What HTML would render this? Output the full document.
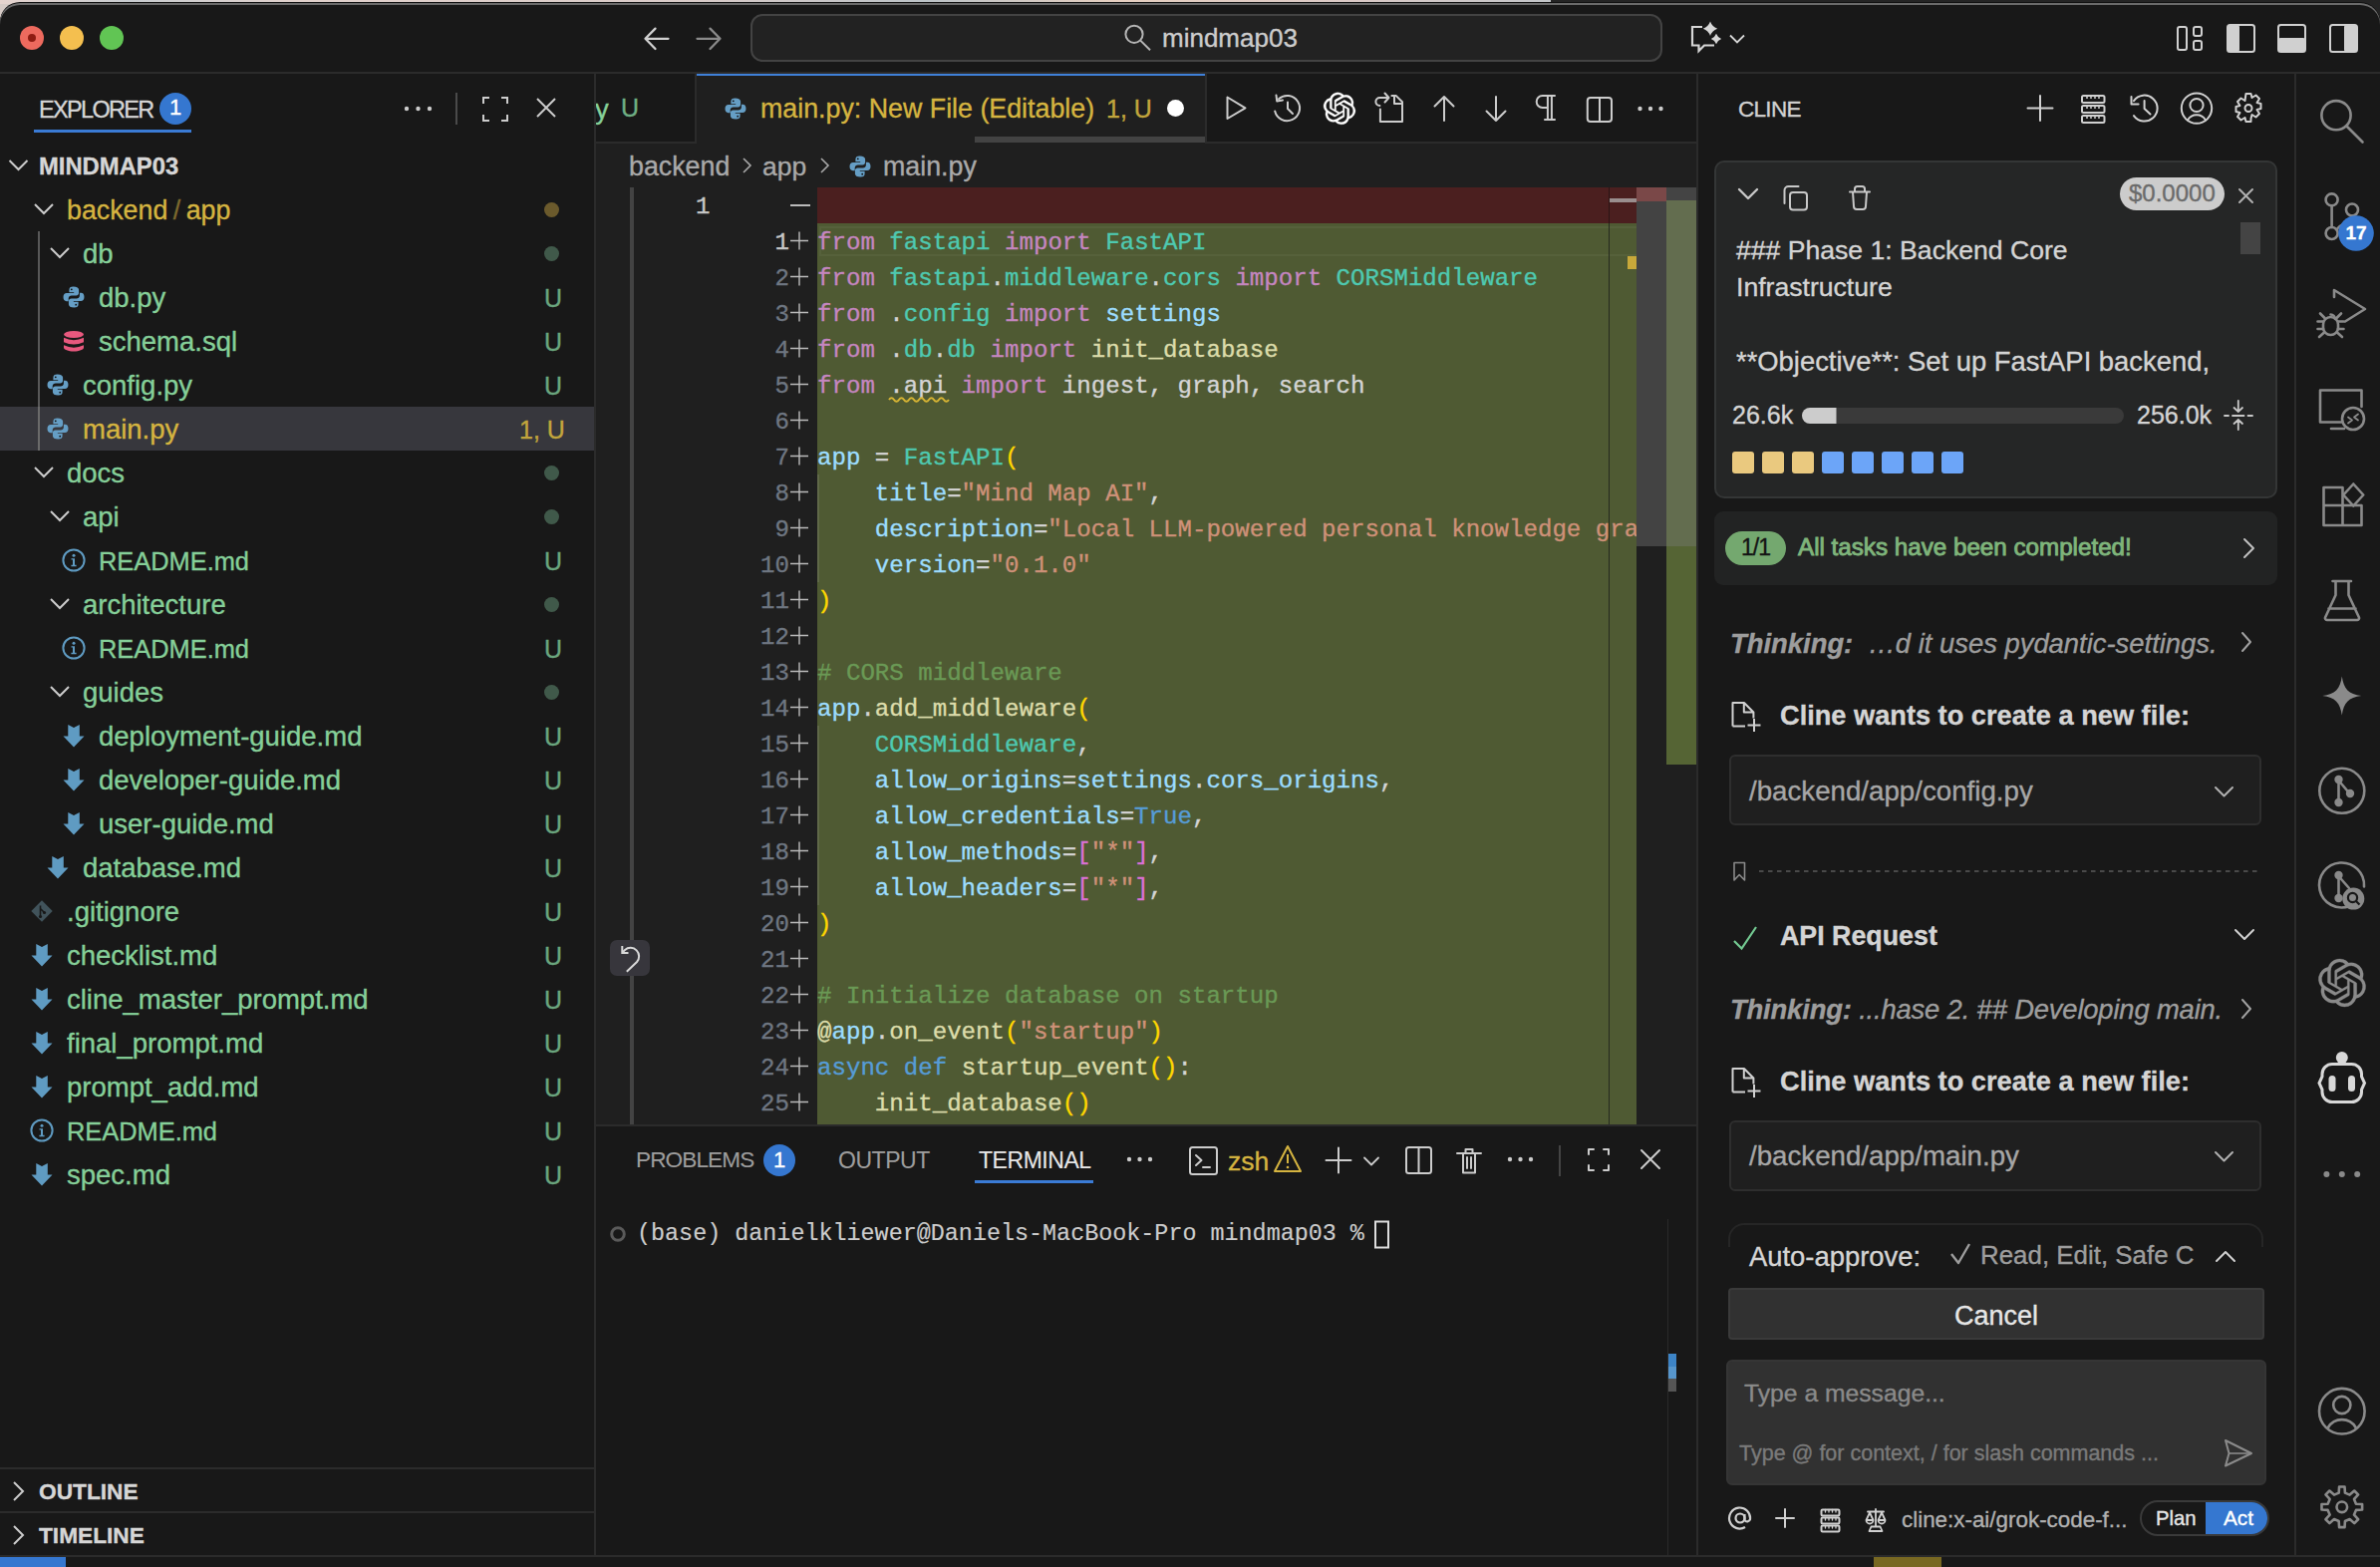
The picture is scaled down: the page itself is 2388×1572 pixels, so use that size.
<!DOCTYPE html>
<html><head><meta charset="utf-8">
<style>
*{box-sizing:border-box;margin:0;padding:0}
html,body{width:2388px;height:1572px;overflow:hidden;background:#d6cbc6}
body{position:relative;font-family:"Liberation Sans",sans-serif;color:#cccccc;-webkit-text-stroke:0.35px currentColor}
.a{position:absolute}
.t{position:absolute;white-space:pre;line-height:1}
.mono{font-family:"Liberation Mono",monospace}
svg{position:absolute;overflow:visible}
#win{position:absolute;left:0;top:3px;width:2388px;height:1569px;background:#181818;border-radius:20px 20px 0 0;box-shadow:inset 0 2px 0 #6a6a6a,0 -1px 0 #111}
.row{position:absolute;left:0;width:596px;height:44px}
.fn{position:absolute;top:0;margin-top:1px;line-height:44px;font-size:26.5px;white-space:pre;color:#81c995}
.gd{position:absolute;right:44px;top:0;margin-top:1px;line-height:44px;font-size:25px;color:#6aa57e}
.dot{position:absolute;left:546px;top:15px;width:15px;height:15px;border-radius:50%;background:#40594a}
.chev{position:absolute;top:0}
.cl{position:absolute;left:820px;white-space:pre;font-family:"Liberation Mono",monospace;font-size:24.1px;line-height:36px;color:#d4d4d4}
.ln{position:absolute;white-space:pre;font-family:"Liberation Mono",monospace;font-size:24.1px;line-height:36px;color:#6e7681;text-align:right}
.k{color:#c586c0}.m{color:#4ec9b0}.v{color:#9cdcfe}.f{color:#dcdcaa}.s{color:#ce9178}.c{color:#6a9955}.b{color:#569cd6}.y{color:#ffd700}.p{color:#da70d6}
</style></head><body>
<svg width="0" height="0" style="position:absolute"><defs>
<path id="i_oai" d="M22.2819 9.8211a5.9847 5.9847 0 0 0-.5157-4.9108 6.0462 6.0462 0 0 0-6.5098-2.9A6.0651 6.0651 0 0 0 4.9807 4.1818a5.9847 5.9847 0 0 0-3.9977 2.9 6.0462 6.0462 0 0 0 .7427 7.0966 5.98 5.98 0 0 0 .511 4.9107 6.051 6.051 0 0 0 6.5146 2.9001A5.9847 5.9847 0 0 0 13.2599 24a6.0557 6.0557 0 0 0 5.7718-4.2058 5.9894 5.9894 0 0 0 3.9977-2.9001 6.0557 6.0557 0 0 0-.7475-7.0729zm-9.022 12.6081a4.4755 4.4755 0 0 1-2.8764-1.0408l.1419-.0804 4.7783-2.7582a.7948.7948 0 0 0 .3927-.6813v-6.7369l2.02 1.1686a.071.071 0 0 1 .038.052v5.5826a4.504 4.504 0 0 1-4.4945 4.4944zm-9.6607-4.1254a4.4708 4.4708 0 0 1-.5346-3.0137l.142.0852 4.783 2.7582a.7712.7712 0 0 0 .7806 0l5.8428-3.3685v2.3324a.0804.0804 0 0 1-.0332.0615L9.74 19.9502a4.4992 4.4992 0 0 1-6.1408-1.6464zM2.3408 7.8956a4.485 4.485 0 0 1 2.3655-1.9728V11.6a.7664.7664 0 0 0 .3879.6765l5.8144 3.3543-2.0201 1.1685a.0757.0757 0 0 1-.071 0l-4.8303-2.7865A4.504 4.504 0 0 1 2.3408 7.872zm16.5963 3.8558L13.1038 8.364 15.1192 7.2a.0757.0757 0 0 1 .071 0l4.8303 2.7913a4.4944 4.4944 0 0 1-.6765 8.1042v-5.6772a.79.79 0 0 0-.407-.667zm2.0107-3.0231l-.142-.0852-4.7735-2.7818a.7759.7759 0 0 0-.7854 0L9.409 9.2297V6.8974a.0662.0662 0 0 1 .0284-.0615l4.8303-2.7866a4.4992 4.4992 0 0 1 6.6802 4.66zM8.3065 12.863l-2.02-1.1638a.0804.0804 0 0 1-.038-.0567V6.0742a4.4992 4.4992 0 0 1 7.3757-3.4537l-.142.0805L8.704 5.459a.7948.7948 0 0 0-.3927.6813zm1.0976-2.3654l2.602-1.4998 2.6069 1.4998v2.9994l-2.5974 1.4997-2.6067-1.4997Z"/>
<g id="i_py"><path fill="#659ec5" d="M11.6 1.5C8.6 1.5 7.4 2.7 7.4 4.8V7.2H12.2V8.1H4.9C2.9 8.1 1.5 9.6 1.5 12.1C1.5 14.6 2.7 16.2 4.7 16.2H6.7V13.4C6.7 11.6 8.1 10.5 9.9 10.5H14.4C16 10.5 17.1 9.4 17.1 7.8V4.8C17.1 2.8 15.2 1.5 11.6 1.5Z"/><path fill="#659ec5" d="M12.4 22.5C15.4 22.5 16.6 21.3 16.6 19.2V16.8H11.8V15.9H19.1C21.1 15.9 22.5 14.4 22.5 11.9C22.5 9.4 21.3 7.8 19.3 7.8H17.9V10.6C17.9 12.4 16.5 13.5 14.7 13.5H9.6C8 13.5 6.9 14.6 6.9 16.2V19.2C6.9 21.2 8.8 22.5 12.4 22.5Z"/><circle cx="9.8" cy="4.3" r="0.9" fill="#111"/><circle cx="14.2" cy="19.7" r="0.9" fill="#111"/></g>
<g id="i_sql" fill="#e8587e"><ellipse cx="12" cy="5.5" rx="10" ry="3.5"/><path d="M2 8.8Q12 13.5 22 8.8V13.2Q12 18 2 13.2Z"/><path d="M2 16.3Q12 21 22 16.3V18.8C22 20.8 17.5 22.5 12 22.5S2 20.8 2 18.8Z"/></g>
<g id="i_info"><circle cx="12" cy="12" r="10.6" fill="none" stroke="#5f9bc2" stroke-width="2"/><circle cx="12" cy="7.3" r="1.5" fill="#5f9bc2"/><path d="M9.5 10.2H13V16.8H14.6V18.2H9.4V16.8H11V11.6H9.5Z" fill="#5f9bc2"/></g>
<g id="i_md"><path fill="#5f9bc2" d="M6.3 1L12 4 17.8 1V12.5H22.5L12 23.5 1.5 12.5H6.3Z"/></g>
<g id="i_git"><path fill="#41535b" d="M12 1.3L22.7 12 12 22.7 1.3 12Z"/><path d="M10.5 6.5V17.5M10.5 9.5L14.5 13.5" stroke="#181818" stroke-width="1.6" fill="none"/><circle cx="10.5" cy="17.5" r="1.6" fill="#181818"/><circle cx="14.5" cy="13.5" r="1.6" fill="#181818"/></g>
</defs></svg>

<div class="a" style="left:0;top:0;width:1556px;height:4px;background:linear-gradient(90deg,#e6d4ce 0,#c8ccd0 130px,#e2d2cc 300px,#d9cbc8 700px,#bcc3c7 930px,#e6cfc0 1120px,#dccac6 1350px,#c3c6c9 1556px)"></div>
<div class="a" style="left:1556px;top:0;width:832px;height:4px;background:#242424"></div>
<div class="a" style="left:2350px;top:0;width:38px;height:30px;background:#242424"></div>
<div id="win"></div>
<!-- title bar -->
<div class="a" style="left:0;top:72px;width:2388px;height:2px;background:#2b2b2b"></div>
<div class="a" style="left:20px;top:26px;width:24px;height:24px;border-radius:50%;background:#ed6a5e"></div>
<div class="a" style="left:28px;top:34px;width:8px;height:8px;border-radius:50%;background:#8e1c12"></div>
<div class="a" style="left:60px;top:26px;width:24px;height:24px;border-radius:50%;background:#f4bf4f"></div>
<div class="a" style="left:100px;top:26px;width:24px;height:24px;border-radius:50%;background:#61c554"></div>
<svg style="left:0;top:0" width="2388" height="74">
<g fill="none" stroke="#d0d0d0" stroke-width="2.3" stroke-linecap="round" stroke-linejoin="round">
<path d="M670.5 38.8H648M657.5 28.6L647.5 38.8L657.5 49"/>
</g>
<g fill="none" stroke="#8a8a8a" stroke-width="2.3" stroke-linecap="round" stroke-linejoin="round">
<path d="M699.5 38.8H722M712.5 28.6L722.5 38.8L712.5 49"/>
</g>
<rect x="754" y="15" width="913" height="46" rx="11" fill="#222222" stroke="#434343" stroke-width="2"/>
<g fill="none" stroke="#b5b5b5" stroke-width="2"><circle cx="1138" cy="34.3" r="8.6"/><path d="M1144.3 40.6L1154 50.3"/></g>
<g fill="none" stroke="#d6d6d6" stroke-width="2.2" stroke-linejoin="miter">
<path d="M1708 27H1698V45.5H1704.5V51L1710 45.5H1720"/>
<path d="M1736 35.5L1743 42.5L1750 35.5" stroke-width="1.8"/>
</g>
<g fill="#d6d6d6">
<path d="M1716 21.6Q1717.9 26.9 1723.2 28.8Q1717.9 30.7 1716 36Q1714.1 30.7 1708.8 28.8Q1714.1 26.9 1716 21.6Z"/>
<path d="M1722 33.8Q1723.4 37.6 1727.2 39Q1723.4 40.4 1722 44.2Q1720.6 40.4 1716.8 39Q1720.6 37.6 1722 33.8Z"/>
</g>
<g fill="none" stroke="#d0d0d0" stroke-width="2">
<rect x="2185" y="27" width="9" height="23" rx="2"/><rect x="2201" y="27" width="8" height="9" rx="2"/><rect x="2201" y="41" width="8" height="9" rx="2"/>
<rect x="2235" y="25" width="27" height="27" rx="2.5"/>
<rect x="2286" y="25" width="27" height="27" rx="2.5"/>
<rect x="2338" y="25" width="27" height="27" rx="2.5"/>
</g>
<g fill="#d0d0d0">
<rect x="2235" y="25" width="12" height="27" rx="2"/>
<rect x="2286" y="38" width="27" height="14" rx="2"/>
<rect x="2352" y="25" width="13" height="27" rx="2"/>
</g>
</svg>
<div class="t" style="left:1166px;top:25px;font-size:26px;color:#cccccc">mindmap03</div>

<!--SIDEBAR-->
<div class="a" style="left:596px;top:74px;width:2px;height:1486px;background:#2b2b2b"></div>
<div class="t" style="left:39px;top:99px;font-size:23.4px;letter-spacing:-1.6px;color:#d6d6d6">EXPLORER</div>
<div class="a" style="left:160px;top:93px;width:32px;height:32px;border-radius:50%;background:#3577d0"></div>
<div class="t" style="left:160px;top:97px;width:32px;text-align:center;font-size:22px;color:#fff">1</div>
<div class="a" style="left:34px;top:130px;width:158px;height:3px;background:#3a7bd5"></div>
<svg style="left:0;top:74px" width="596" height="70"><g fill="#cccccc"><circle cx="408" cy="35" r="2.2"/><circle cx="419.5" cy="35" r="2.2"/><circle cx="431" cy="35" r="2.2"/></g>
<rect x="457" y="19" width="2" height="32" fill="#4a4a4a"/>
<g fill="none" stroke="#cccccc" stroke-width="2"><path d="M485 30V24H491M503 24H509V30M509 41V47H503M491 47H485V41"/><path d="M539 25L557 43M557 25L539 43"/></g></svg>
<svg style="left:0;top:144px" width="40" height="44"><path d="M9.5 17L18.5 26L27.5 17" fill="none" stroke="#cccccc" stroke-width="2"/></svg>
<div class="t" style="left:39px;top:155px;font-size:23.8px;font-weight:bold;color:#d6d6d6">MINDMAP03</div>
<div class="a" style="left:38px;top:232px;width:2px;height:220px;background:#585858"></div>
<div class="a" style="left:0;top:408px;width:596px;height:44px;background:#37373d"></div>
<div class="a" style="left:38px;top:408px;width:2px;height:44px;background:#6a6a6a"></div>
<svg style="left:34px;top:188px" width="22" height="44"><path d="M1 17L10 26L19 17" fill="none" stroke="#cccccc" stroke-width="2"/></svg>
<div class="fn" style="left:67px;top:188px;color:#d5b440;font-size:26.8px">backend<span style="color:#7d6a2e;margin:0 -2px"> / </span>app</div>
<div class="dot" style="top:203px;background:#6b5a2c"></div>
<svg style="left:50px;top:232px" width="22" height="44"><path d="M1 17L10 26L19 17" fill="none" stroke="#cccccc" stroke-width="2"/></svg>
<div class="fn" style="left:83px;top:232px;color:#85cf98;font-size:27.5px">db</div>
<div class="dot" style="top:247px"></div>
<svg style="left:61.5px;top:286px" width="24" height="24"><use href="#i_py"/></svg>
<div class="fn" style="left:99px;top:276px;color:#85cf98;font-size:27.5px">db.py</div>
<div class="gd" style="top:276px;right:auto;left:546px">U</div>
<svg style="left:61.5px;top:330px" width="24" height="24"><use href="#i_sql"/></svg>
<div class="fn" style="left:99px;top:320px;color:#85cf98;font-size:27.5px">schema.sql</div>
<div class="gd" style="top:320px;right:auto;left:546px">U</div>
<svg style="left:45.5px;top:374px" width="24" height="24"><use href="#i_py"/></svg>
<div class="fn" style="left:83px;top:364px;color:#85cf98;font-size:27.5px">config.py</div>
<div class="gd" style="top:364px;right:auto;left:546px">U</div>
<svg style="left:45.5px;top:418px" width="24" height="24"><use href="#i_py"/></svg>
<div class="fn" style="left:83px;top:408px;color:#d5b440;font-size:27.5px">main.py</div>
<div class="gd" style="top:408px;right:auto;left:521px;color:#c1a53c">1, U</div>
<svg style="left:34px;top:452px" width="22" height="44"><path d="M1 17L10 26L19 17" fill="none" stroke="#cccccc" stroke-width="2"/></svg>
<div class="fn" style="left:67px;top:452px;color:#85cf98;font-size:27.5px">docs</div>
<div class="dot" style="top:467px"></div>
<svg style="left:50px;top:496px" width="22" height="44"><path d="M1 17L10 26L19 17" fill="none" stroke="#cccccc" stroke-width="2"/></svg>
<div class="fn" style="left:83px;top:496px;color:#85cf98;font-size:27.5px">api</div>
<div class="dot" style="top:511px"></div>
<svg style="left:61.5px;top:550px" width="24" height="24"><use href="#i_info"/></svg>
<div class="fn" style="left:99px;top:540px;color:#85cf98;font-size:25.4px">README.md</div>
<div class="gd" style="top:540px;right:auto;left:546px">U</div>
<svg style="left:50px;top:584px" width="22" height="44"><path d="M1 17L10 26L19 17" fill="none" stroke="#cccccc" stroke-width="2"/></svg>
<div class="fn" style="left:83px;top:584px;color:#85cf98;font-size:27.5px">architecture</div>
<div class="dot" style="top:599px"></div>
<svg style="left:61.5px;top:638px" width="24" height="24"><use href="#i_info"/></svg>
<div class="fn" style="left:99px;top:628px;color:#85cf98;font-size:25.4px">README.md</div>
<div class="gd" style="top:628px;right:auto;left:546px">U</div>
<svg style="left:50px;top:672px" width="22" height="44"><path d="M1 17L10 26L19 17" fill="none" stroke="#cccccc" stroke-width="2"/></svg>
<div class="fn" style="left:83px;top:672px;color:#85cf98;font-size:27.5px">guides</div>
<div class="dot" style="top:687px"></div>
<svg style="left:61.5px;top:726px" width="24" height="24"><use href="#i_md"/></svg>
<div class="fn" style="left:99px;top:716px;color:#85cf98;font-size:27.5px">deployment-guide.md</div>
<div class="gd" style="top:716px;right:auto;left:546px">U</div>
<svg style="left:61.5px;top:770px" width="24" height="24"><use href="#i_md"/></svg>
<div class="fn" style="left:99px;top:760px;color:#85cf98;font-size:27.5px">developer-guide.md</div>
<div class="gd" style="top:760px;right:auto;left:546px">U</div>
<svg style="left:61.5px;top:814px" width="24" height="24"><use href="#i_md"/></svg>
<div class="fn" style="left:99px;top:804px;color:#85cf98;font-size:27.5px">user-guide.md</div>
<div class="gd" style="top:804px;right:auto;left:546px">U</div>
<svg style="left:45.5px;top:858px" width="24" height="24"><use href="#i_md"/></svg>
<div class="fn" style="left:83px;top:848px;color:#85cf98;font-size:27.5px">database.md</div>
<div class="gd" style="top:848px;right:auto;left:546px">U</div>
<svg style="left:29.5px;top:902px" width="24" height="24"><use href="#i_git"/></svg>
<div class="fn" style="left:67px;top:892px;color:#85cf98;font-size:27.5px">.gitignore</div>
<div class="gd" style="top:892px;right:auto;left:546px">U</div>
<svg style="left:29.5px;top:946px" width="24" height="24"><use href="#i_md"/></svg>
<div class="fn" style="left:67px;top:936px;color:#85cf98;font-size:27.5px">checklist.md</div>
<div class="gd" style="top:936px;right:auto;left:546px">U</div>
<svg style="left:29.5px;top:990px" width="24" height="24"><use href="#i_md"/></svg>
<div class="fn" style="left:67px;top:980px;color:#85cf98;font-size:27.5px">cline_master_prompt.md</div>
<div class="gd" style="top:980px;right:auto;left:546px">U</div>
<svg style="left:29.5px;top:1034px" width="24" height="24"><use href="#i_md"/></svg>
<div class="fn" style="left:67px;top:1024px;color:#85cf98;font-size:27.5px">final_prompt.md</div>
<div class="gd" style="top:1024px;right:auto;left:546px">U</div>
<svg style="left:29.5px;top:1078px" width="24" height="24"><use href="#i_md"/></svg>
<div class="fn" style="left:67px;top:1068px;color:#85cf98;font-size:27.5px">prompt_add.md</div>
<div class="gd" style="top:1068px;right:auto;left:546px">U</div>
<svg style="left:29.5px;top:1122px" width="24" height="24"><use href="#i_info"/></svg>
<div class="fn" style="left:67px;top:1112px;color:#85cf98;font-size:25.4px">README.md</div>
<div class="gd" style="top:1112px;right:auto;left:546px">U</div>
<svg style="left:29.5px;top:1166px" width="24" height="24"><use href="#i_md"/></svg>
<div class="fn" style="left:67px;top:1156px;color:#85cf98;font-size:27.5px">spec.md</div>
<div class="gd" style="top:1156px;right:auto;left:546px">U</div>
<div class="a" style="left:0;top:1472px;width:596px;height:2px;background:#2b2b2b"></div>
<div class="a" style="left:0;top:1516px;width:596px;height:2px;background:#2b2b2b"></div>
<svg style="left:0;top:1474px" width="40" height="44"><path d="M14 13L23 22L14 31" fill="none" stroke="#cccccc" stroke-width="2"/></svg>
<div class="t" style="left:39px;top:1485px;font-size:22.7px;font-weight:bold;color:#d6d6d6">OUTLINE</div>
<svg style="left:0;top:1518px" width="40" height="44"><path d="M14 13L23 22L14 31" fill="none" stroke="#cccccc" stroke-width="2"/></svg>
<div class="t" style="left:39px;top:1529px;font-size:22.7px;font-weight:bold;color:#d6d6d6">TIMELINE</div>
<!--/SIDEBAR-->
<!--EDITOR-->
<div class="a" style="left:598px;top:142px;width:1104px;height:2px;background:#2b2b2b"></div>
<div class="a" style="left:697px;top:74px;width:2px;height:70px;background:#2b2b2b"></div>
<div class="a" style="left:598px;top:74px;width:99px;height:68px;overflow:hidden"><div class="t" style="left:-1px;top:22px;font-size:27.5px;color:#85cf98">y</div><div class="t" style="left:25px;top:22px;font-size:25px;color:#6fae84">U</div></div>
<div class="a" style="left:699px;top:74px;width:510px;height:70px;background:#1f1f1f"></div>
<div class="a" style="left:699px;top:74px;width:510px;height:2px;background:#3f80d8"></div>
<div class="a" style="left:1209px;top:74px;width:2px;height:70px;background:#2b2b2b"></div>
<svg style="left:726px;top:97px" width="24" height="24"><use href="#i_py"/></svg>
<div class="t" style="left:763px;top:96px;font-size:26.8px;color:#d5b440">main.py: New File (Editable)</div>
<div class="t" style="left:1110px;top:97px;font-size:25px;color:#c1a53c">1, U</div>
<div class="a" style="left:1171px;top:100px;width:17px;height:17px;border-radius:50%;background:#ffffff"></div>
<div class="a" style="left:978px;top:137px;width:231px;height:6px;background:#434343"></div>
<svg style="left:1211px;top:74px" width="491" height="68"><g fill="none" stroke="#cccccc" stroke-width="2" stroke-linejoin="round" stroke-linecap="round">
<path d="M20.5 23.5V45L38.5 34.3Z"/>
<path d="M72 25.2A12.6 12.6 0 1 1 68.2 37.5"/><path d="M69.5 21.5L70.2 27.5L76 26.5"/><path d="M81 28.5V35L86 40"/>
<path d="M1391 0" />
<path d="M173.9 35.4V48H196V28.2L189.6 21.9H185.4"/><path d="M188 22V30H196"/><path d="M173.4 32A4 4 0 0 1 173.4 24H182M178.5 19.5L182.5 24L178.5 28.5"/>
<path d="M238 47V23M228.5 32.5L238 23L247.5 32.5"/>
<path d="M290 23V47M280.5 37.5L290 47L299.5 37.5"/>
<path d="M336.6 22.1H349M341.9 22.1V45.9M345.9 22.1V45.9M339 45.9H349M341.9 22.1H336.6A5.9 5.9 0 0 0 336.6 33.9H341.9"/>
<rect x="381.8" y="24" width="24.2" height="24" rx="3"/><path d="M394 24V48"/>
</g>

<g fill="#cccccc"><circle cx="434.5" cy="35" r="2.2"/><circle cx="445" cy="35" r="2.2"/><circle cx="455.5" cy="35" r="2.2"/></g>
<use href="#i_oai" transform="translate(117 18.8) scale(1.333)" fill="#ffffff" stroke="#ffffff" stroke-width="0.25"/>
</svg>
<div class="a" style="left:598px;top:144px;width:1104px;height:984px;background:#1f1f1f"></div>
<div class="t" style="left:631px;top:154px;font-size:26.8px;color:#a9a9a9">backend</div>
<div class="t" style="left:765px;top:154px;font-size:26.5px;color:#a9a9a9">app</div>
<div class="t" style="left:886px;top:154px;font-size:26.8px;color:#a9a9a9">main.py</div>
<svg style="left:0;top:144px" width="1000" height="44"><g fill="none" stroke="#a9a9a9" stroke-width="1.6"><path d="M746 15L753 22L746 29"/><path d="M824 15L831 22L824 29"/></g></svg>
<svg style="left:851px;top:155px" width="24" height="24"><use href="#i_py"/></svg>
<div class="a" style="left:632px;top:188px;width:4px;height:940px;background:#434343"></div>
<div class="a" style="left:820px;top:188px;width:822px;height:36px;background:#4b1f1f"></div>
<div class="a" style="left:820px;top:224px;width:822px;height:904px;background:#4f5a33"></div>
<div class="a" style="left:822px;top:227px;width:820px;height:30px;border:2px solid rgba(255,255,255,0.045);border-right:none"></div>
<div class="a" style="left:1614px;top:188px;width:1px;height:940px;background:#262a1f"></div>
<div class="a" style="left:1614px;top:188px;width:1px;height:36px;background:#2a1515"></div>
<div class="a" style="left:1615px;top:199px;width:27px;height:4px;background:#9a8e8e"></div>
<div class="a" style="left:1633px;top:257px;width:9px;height:13px;background:#c8a83a"></div>
<div class="a" style="left:1642px;top:188px;width:30px;height:360px;background:#434343"></div>
<div class="a" style="left:1642px;top:188px;width:30px;height:14px;background:#7a4848"></div>
<div class="a" style="left:1672px;top:188px;width:30px;height:13px;background:#444444"></div>
<div class="a" style="left:1672px;top:201px;width:30px;height:347px;background:#636d4f"></div>
<div class="a" style="left:1672px;top:548px;width:30px;height:219px;background:#556434"></div>
<div class="a" style="left:820px;top:728px;width:2px;height:180px;background:#5f6848"></div>
<div class="a" style="left:820px;top:476px;width:2px;height:108px;background:#5f6848"></div>
<div class="ln" style="left:698px;top:190px;width:30px;text-align:left;color:#c6c6c6">1</div>
<div class="a" style="left:793px;top:205px;width:20px;height:1.6px;background:#bbbbbb"></div>
<div class="ln" style="left:700px;top:226px;width:92px;color:#c6c6c6">1</div>
<div class="ln" style="left:700px;top:262px;width:92px;color:#6e7681">2</div>
<div class="ln" style="left:700px;top:298px;width:92px;color:#6e7681">3</div>
<div class="ln" style="left:700px;top:334px;width:92px;color:#6e7681">4</div>
<div class="ln" style="left:700px;top:370px;width:92px;color:#6e7681">5</div>
<div class="ln" style="left:700px;top:406px;width:92px;color:#6e7681">6</div>
<div class="ln" style="left:700px;top:442px;width:92px;color:#6e7681">7</div>
<div class="ln" style="left:700px;top:478px;width:92px;color:#6e7681">8</div>
<div class="ln" style="left:700px;top:514px;width:92px;color:#6e7681">9</div>
<div class="ln" style="left:700px;top:550px;width:92px;color:#6e7681">10</div>
<div class="ln" style="left:700px;top:586px;width:92px;color:#6e7681">11</div>
<div class="ln" style="left:700px;top:622px;width:92px;color:#6e7681">12</div>
<div class="ln" style="left:700px;top:658px;width:92px;color:#6e7681">13</div>
<div class="ln" style="left:700px;top:694px;width:92px;color:#6e7681">14</div>
<div class="ln" style="left:700px;top:730px;width:92px;color:#6e7681">15</div>
<div class="ln" style="left:700px;top:766px;width:92px;color:#6e7681">16</div>
<div class="ln" style="left:700px;top:802px;width:92px;color:#6e7681">17</div>
<div class="ln" style="left:700px;top:838px;width:92px;color:#6e7681">18</div>
<div class="ln" style="left:700px;top:874px;width:92px;color:#6e7681">19</div>
<div class="ln" style="left:700px;top:910px;width:92px;color:#6e7681">20</div>
<div class="ln" style="left:700px;top:946px;width:92px;color:#6e7681">21</div>
<div class="ln" style="left:700px;top:982px;width:92px;color:#6e7681">22</div>
<div class="ln" style="left:700px;top:1018px;width:92px;color:#6e7681">23</div>
<div class="ln" style="left:700px;top:1054px;width:92px;color:#6e7681">24</div>
<div class="ln" style="left:700px;top:1090px;width:92px;color:#6e7681">25</div>
<svg style="left:0;top:0" width="1000" height="1130"><g stroke="#bbbbbb" stroke-width="1.4" fill="none"><path d="M793 241.5H811M802 232.5V250.5"/><path d="M793 277.5H811M802 268.5V286.5"/><path d="M793 313.5H811M802 304.5V322.5"/><path d="M793 349.5H811M802 340.5V358.5"/><path d="M793 385.5H811M802 376.5V394.5"/><path d="M793 421.5H811M802 412.5V430.5"/><path d="M793 457.5H811M802 448.5V466.5"/><path d="M793 493.5H811M802 484.5V502.5"/><path d="M793 529.5H811M802 520.5V538.5"/><path d="M793 565.5H811M802 556.5V574.5"/><path d="M793 601.5H811M802 592.5V610.5"/><path d="M793 637.5H811M802 628.5V646.5"/><path d="M793 673.5H811M802 664.5V682.5"/><path d="M793 709.5H811M802 700.5V718.5"/><path d="M793 745.5H811M802 736.5V754.5"/><path d="M793 781.5H811M802 772.5V790.5"/><path d="M793 817.5H811M802 808.5V826.5"/><path d="M793 853.5H811M802 844.5V862.5"/><path d="M793 889.5H811M802 880.5V898.5"/><path d="M793 925.5H811M802 916.5V934.5"/><path d="M793 961.5H811M802 952.5V970.5"/><path d="M793 997.5H811M802 988.5V1006.5"/><path d="M793 1033.5H811M802 1024.5V1042.5"/><path d="M793 1069.5H811M802 1060.5V1078.5"/><path d="M793 1105.5H811M802 1096.5V1114.5"/></g></svg>
<div class="a" style="left:0;top:0;width:1642px;height:1128px;overflow:hidden"><div class="cl" style="top:226px"><span class="k">from</span> <span class="m">fastapi</span> <span class="k">import</span> <span class="m">FastAPI</span></div><div class="cl" style="top:262px"><span class="k">from</span> <span class="m">fastapi</span>.<span class="m">middleware</span>.<span class="m">cors</span> <span class="k">import</span> <span class="m">CORSMiddleware</span></div><div class="cl" style="top:298px"><span class="k">from</span> .<span class="m">config</span> <span class="k">import</span> <span class="v">settings</span></div><div class="cl" style="top:334px"><span class="k">from</span> .<span class="m">db</span>.<span class="m">db</span> <span class="k">import</span> <span class="f">init_database</span></div><div class="cl" style="top:370px"><span class="k">from</span> .api <span class="k">import</span> ingest, graph, search</div><div class="cl" style="top:406px"></div><div class="cl" style="top:442px"><span class="v">app</span> = <span class="m">FastAPI</span><span class="y">(</span></div><div class="cl" style="top:478px">    <span class="v">title</span>=<span class="s">&quot;Mind Map AI&quot;</span>,</div><div class="cl" style="top:514px">    <span class="v">description</span>=<span class="s">&quot;Local LLM-powered personal knowledge graph system&quot;</span>,</div><div class="cl" style="top:550px">    <span class="v">version</span>=<span class="s">&quot;0.1.0&quot;</span></div><div class="cl" style="top:586px"><span class="y">)</span></div><div class="cl" style="top:622px"></div><div class="cl" style="top:658px"><span class="c"># CORS middleware</span></div><div class="cl" style="top:694px"><span class="v">app</span>.<span class="f">add_middleware</span><span class="y">(</span></div><div class="cl" style="top:730px">    <span class="m">CORSMiddleware</span>,</div><div class="cl" style="top:766px">    <span class="v">allow_origins</span>=<span class="v">settings</span>.<span class="v">cors_origins</span>,</div><div class="cl" style="top:802px">    <span class="v">allow_credentials</span>=<span class="b">True</span>,</div><div class="cl" style="top:838px">    <span class="v">allow_methods</span>=<span class="p">[</span><span class="s">&quot;*&quot;</span><span class="p">]</span>,</div><div class="cl" style="top:874px">    <span class="v">allow_headers</span>=<span class="p">[</span><span class="s">&quot;*&quot;</span><span class="p">]</span>,</div><div class="cl" style="top:910px"><span class="y">)</span></div><div class="cl" style="top:946px"></div><div class="cl" style="top:982px"><span class="c"># Initialize database on startup</span></div><div class="cl" style="top:1018px"><span class="f">@</span><span class="v">app</span>.<span class="f">on_event</span><span class="y">(</span><span class="s">&quot;startup&quot;</span><span class="y">)</span></div><div class="cl" style="top:1054px"><span class="b">async</span> <span class="b">def</span> <span class="f">startup_event</span><span class="y">()</span>:</div><div class="cl" style="top:1090px">    <span class="f">init_database</span><span class="y">()</span></div></div>
<svg style="left:0;top:0" width="1000" height="420"><path d="M892 401 q2.5 -3.5 5 0 q2.5 3.5 5 0 q2.5 -3.5 5 0 q2.5 3.5 5 0 q2.5 -3.5 5 0 q2.5 3.5 5 0 q2.5 -3.5 5 0 q2.5 3.5 5 0 q2.5 -3.5 5 0 q2.5 3.5 5 0 q2.5 -3.5 5 0 q2.5 3.5 5 0" fill="none" stroke="#d7b433" stroke-width="2"/></svg>
<div class="a" style="left:612px;top:943px;width:40px;height:36px;border-radius:7px;background:#37363c"></div>
<svg style="left:611px;top:942px" width="42" height="38"><g fill="none" stroke="#d8d8d8" stroke-width="2" stroke-linecap="butt" stroke-linejoin="miter"><path d="M13.3 7V14H19.5"/><path d="M13.5 13.5L16 11A8.5 8.5 0 0 1 28 23L17.8 32.8"/></g></svg>
<!--/EDITOR-->
<!--PANEL-->
<div class="a" style="left:598px;top:1128px;width:1104px;height:2px;background:#2b2b2b"></div>
<div class="t" style="left:638px;top:1153px;font-size:22.6px;letter-spacing:-0.9px;-webkit-text-stroke:0.1px #9d9d9d;color:#9d9d9d">PROBLEMS</div>
<div class="a" style="left:766px;top:1148px;width:32px;height:32px;border-radius:50%;background:#3577d0"></div>
<div class="t" style="left:766px;top:1153px;width:32px;text-align:center;font-size:22px;color:#fff">1</div>
<div class="t" style="left:841px;top:1153px;font-size:23px;letter-spacing:-0.45px;-webkit-text-stroke:0.1px #9d9d9d;color:#9d9d9d">OUTPUT</div>
<div class="t" style="left:982px;top:1153px;font-size:23px;letter-spacing:-0.45px;-webkit-text-stroke:0.1px #e7e7e7;color:#e7e7e7">TERMINAL</div>
<div class="a" style="left:978px;top:1184px;width:119px;height:3px;background:#3a7bd5"></div>
<div class="t" style="left:1232px;top:1152px;font-size:26.5px;color:#d5b440">zsh</div>
<svg style="left:0;top:1130px" width="1702" height="70"><g fill="#cccccc"><circle cx="1133" cy="33" r="2.2"/><circle cx="1143.5" cy="33" r="2.2"/><circle cx="1154" cy="33" r="2.2"/>
<circle cx="1515" cy="33" r="2.2"/><circle cx="1525.5" cy="33" r="2.2"/><circle cx="1536" cy="33" r="2.2"/></g>
<g fill="none" stroke="#cccccc" stroke-width="2" stroke-linejoin="round" stroke-linecap="round">
<rect x="1194" y="21" width="27" height="27" rx="2.5"/><path d="M1200 29L1205.5 34L1200 39M1207 41H1214"/>
<path d="M1330.5 34H1355.5M1343 21.5V46.5"/><path d="M1369 31.5L1376 38.5L1383 31.5" stroke-width="1.8"/>
<rect x="1411" y="21" width="25" height="26" rx="2.5"/><path d="M1423.5 21V47"/>
<path d="M1462 27H1486M1468 27V46.5H1480V27M1470.5 27V23H1477.5V27M1472 31V42M1476 31V42"/>
<path d="M1594 28V23H1599M1609 23H1614V28M1614 39V44H1609M1599 44H1594V39"/>
<path d="M1647 24L1665 42M1665 24L1647 42"/>
</g>
<g fill="none" stroke="#d5b440" stroke-width="2" stroke-linejoin="round"><path d="M1292 20L1305 45H1279Z"/><path d="M1292 28V37"/></g><circle cx="1292" cy="41" r="1.3" fill="#d5b440"/>
<rect x="1564" y="19" width="2" height="31" fill="#444"/>
</svg>
<svg style="left:0;top:1200px" width="1702" height="80"><circle cx="620" cy="38" r="6.3" fill="none" stroke="#5a5a5a" stroke-width="3"/><rect x="1380" y="25.5" width="13" height="26" fill="none" stroke="#dddddd" stroke-width="2"/></svg>
<div class="t mono" style="left:639px;top:1227px;font-size:23.4px;-webkit-text-stroke:0.15px #cccccc;color:#cccccc">(base) danielkliewer@Daniels-MacBook-Pro mindmap03 %</div>
<div class="a" style="left:1673px;top:1223px;width:1px;height:337px;background:#2b2b2b"></div>
<div class="a" style="left:1674px;top:1358px;width:8px;height:25px;background:#3d84c6"></div>
<div class="a" style="left:1674px;top:1371px;width:8px;height:12px;background:#5796cc"></div>
<div class="a" style="left:1674px;top:1383px;width:8px;height:13px;background:#555"></div>
<!--/PANEL-->
<!--CLINE-->
<div class="a" style="left:1702px;top:74px;width:2px;height:1486px;background:#2b2b2b"></div>
<div class="t" style="left:1744px;top:99px;font-size:22.5px;letter-spacing:-0.7px;color:#d0d0d0">CLINE</div>
<svg style="left:0;top:74px" width="2300" height="70"><g fill="none" stroke="#d0d0d0" stroke-width="2" stroke-linecap="round" stroke-linejoin="round">
<path d="M2034.5 34.5H2059.5M2047 22V47"/>
<rect x="2089" y="22" width="22.5" height="7" rx="1.5"/><rect x="2089" y="32" width="22.5" height="7" rx="1.5"/><rect x="2089" y="42" width="22.5" height="7" rx="1.5"/>
<path d="M2141 27.1A13 13 0 1 1 2141 42.1"/><path d="M2138.5 23V30.6H2145.6"/><path d="M2151.6 27V35L2157.5 40.5"/>
<circle cx="2204" cy="34.6" r="15.2"/><circle cx="2204" cy="31.5" r="6.6"/><path d="M2195 46.4A10.5 10.5 0 0 1 2213 46.4"/>
<path d="M2253.5 20.5H2258.5L2259.5 24.5L2263.5 22L2267 25.5L2264.5 29.5L2268.5 30.5V35.5L2264.5 36.5L2267 40.5L2263.5 44L2259.5 41.5L2258.5 45.5V48.5H2253.5L2252.5 44.5L2248.5 47L2245 43.5L2247.5 39.5L2243.5 38.5V33.5L2247.5 32.5L2245 28.5L2248.5 25L2252.5 27.5Z" transform="translate(0 -0.5)"/>
<circle cx="2256" cy="34.5" r="3.5"/>
</g>
<g stroke="#d0d0d0" stroke-width="1.5"><path d="M2094 22V25M2098 22V25M2102 22V25M2106 22V25M2094 32V35M2098 32V35M2102 32V35M2106 32V35M2094 42V45M2098 42V45M2102 42V45M2106 42V45"/></g>
</svg>
<div class="a" style="left:1720px;top:161px;width:565px;height:339px;border-radius:10px;background:#252626;border:2px solid #343636"></div>
<svg style="left:1720px;top:161px" width="565" height="339"><g fill="none" stroke="#c8c8c8" stroke-width="2" stroke-linecap="round" stroke-linejoin="round">
<path d="M25 29L34 38L43 29" stroke-width="2.4"/>
<path d="M70.5 43V30A4 4 0 0 1 74.5 26H84.5"/><rect x="76" y="32" width="17" height="17.5" rx="3"/>
<path d="M136 31.5H156M141 31.5V28.5A2.5 2.5 0 0 1 143.5 26H148.5A2.5 2.5 0 0 1 151 28.5V31.5M139 31.5L140 46A3 3 0 0 0 143 49H149A3 3 0 0 0 152 46L153 31.5"/>
<path d="M527 29L540 42M540 29L527 42" stroke="#b0b0b0"/>
</g>
<rect x="407" y="17" width="105" height="33" rx="16.5" fill="#cccccc"/>
<rect x="528" y="62" width="20" height="32" fill="#444444"/>
<rect x="88" y="248" width="323" height="16" rx="8" fill="#3a3a3a"/>
<path d="M96 248H122.5V264H96A8 8 0 0 1 96 248Z" fill="#cccccc"/>
<g fill="none" stroke="#c8c8c8" stroke-width="1.8" stroke-linecap="round"><path d="M525.8 241V252M521.5 248L525.8 252L530 248M525.8 260V270M521.5 264L525.8 260L530 264M512 256H516M520 256H531.5M535.5 256H540"/></g>
</svg>
<div class="t" style="left:2136px;top:182px;font-size:24px;color:#6b6b6b">$0.0000</div>
<div class="t" style="left:1742px;top:233px;font-size:26.6px;color:#d4d4d4;line-height:37px">### Phase 1: Backend Core
Infrastructure</div>
<div class="t" style="left:1742px;top:344px;font-size:27.4px;color:#d4d4d4;line-height:37px">**Objective**: Set up FastAPI backend,</div>
<div class="t" style="left:1738px;top:404px;font-size:25px;color:#d4d4d4">26.6k</div>
<div class="t" style="left:2144px;top:404px;font-size:25px;color:#d4d4d4">256.0k</div>
<div class="a" style="left:1738px;top:453px;width:22px;height:22px;border-radius:3px;background:#eac97f"></div><div class="a" style="left:1768px;top:453px;width:22px;height:22px;border-radius:3px;background:#eac97f"></div><div class="a" style="left:1798px;top:453px;width:22px;height:22px;border-radius:3px;background:#eac97f"></div><div class="a" style="left:1828px;top:453px;width:22px;height:22px;border-radius:3px;background:#6ca5f8"></div><div class="a" style="left:1858px;top:453px;width:22px;height:22px;border-radius:3px;background:#6ca5f8"></div><div class="a" style="left:1888px;top:453px;width:22px;height:22px;border-radius:3px;background:#6ca5f8"></div><div class="a" style="left:1918px;top:453px;width:22px;height:22px;border-radius:3px;background:#6ca5f8"></div><div class="a" style="left:1948px;top:453px;width:22px;height:22px;border-radius:3px;background:#6ca5f8"></div>
<div class="a" style="left:1720px;top:513px;width:565px;height:74px;border-radius:9px;background:#222323"></div>
<div class="a" style="left:1731px;top:533px;width:61px;height:34px;border-radius:17px;background:#74a86f"></div>
<div class="t" style="left:1731px;top:538px;width:61px;text-align:center;font-size:23px;letter-spacing:-1px;color:#141414">1/1</div>
<div class="t" style="left:1804px;top:537px;font-size:24.2px;-webkit-text-stroke:0.9px #7fb57b;color:#7fb57b">All tasks have been completed!</div>
<div class="t" style="left:1736px;top:632px;font-size:27.4px;color:#9d9d9d;font-style:italic"><b style="color:#9d9d9d">Thinking:</b>  …d it uses pydantic-settings.</div>
<div class="t" style="left:1786px;top:703.5px;font-size:27.2px;font-weight:bold;color:#d4d4d4">Cline wants to create a new file:</div>
<div class="a" style="left:1735px;top:757px;width:534px;height:71px;border-radius:6px;background:#1f1f1f;border:2px solid #2e2e2e"></div>
<div class="t" style="left:1755px;top:780px;font-size:27.7px;color:#a6a6a6">/backend/app/config.py</div>
<div class="t" style="left:1786px;top:926px;font-size:26.8px;font-weight:bold;color:#d4d4d4">API Request</div>
<div class="t" style="left:1736px;top:999px;font-size:27.4px;letter-spacing:-0.17px;color:#9d9d9d;font-style:italic"><b style="color:#9d9d9d">Thinking:</b> ...hase 2. ## Developing main.</div>
<div class="t" style="left:1786px;top:1070.5px;font-size:27.2px;font-weight:bold;color:#d4d4d4">Cline wants to create a new file:</div>
<div class="a" style="left:1735px;top:1124px;width:534px;height:71px;border-radius:6px;background:#1f1f1f;border:2px solid #2e2e2e"></div>
<div class="t" style="left:1755px;top:1146px;font-size:27.7px;color:#a6a6a6">/backend/app/main.py</div>
<div class="a" style="left:1734px;top:1227px;width:537px;height:24px;border-radius:16px 16px 0 0;border:2px solid #262626;border-bottom:none"></div>
<div class="t" style="left:1755px;top:1247px;font-size:27.4px;color:#d4d4d4">Auto-approve:</div>
<div class="t" style="left:1987px;top:1247px;font-size:25.9px;color:#9d9d9d">Read, Edit, Safe C</div>
<div class="a" style="left:1734px;top:1292px;width:538px;height:52px;border-radius:4px;background:#313131;border:2px solid #3a3a3a"></div>
<div class="t" style="left:1734px;top:1307px;width:538px;text-align:center;font-size:27px;color:#e6e6e6">Cancel</div>
<div class="a" style="left:1732px;top:1364px;width:542px;height:126px;border-radius:6px;background:#313131;border:2px solid #353535"></div>
<div class="t" style="left:1750px;top:1386px;font-size:24.7px;color:#8a8a8a">Type a message...</div>
<div class="t" style="left:1745px;top:1448px;font-size:21.5px;color:#7a7a7a">Type @ for context, / for slash commands ...</div>
<svg style="left:0;top:1400px" width="2300" height="160"><g fill="none" stroke="#8a8a8a" stroke-width="2" stroke-linejoin="round"><path d="M2233 45L2259 58L2233 70.5L2236.5 58Z"/><path d="M2236.5 58H2259" stroke-width="1.6"/></g>
<g fill="none" stroke="#d0d0d0" stroke-width="2" stroke-linecap="round" stroke-linejoin="round">
<path d="M1791 114V132M1782 123H1800"/>
<rect x="1827.5" y="114.5" width="18" height="6" rx="1.2"/><rect x="1827.5" y="122.5" width="18" height="6" rx="1.2"/><rect x="1827.5" y="130.5" width="18" height="6" rx="1.2"/>
<path d="M1882 114V131M1874 116.5H1890M1876 117.5L1872.5 125H1879.5ZM1888 117.5L1884.5 125H1891.5ZM1872.5 125A3.5 3.5 0 0 0 1879.5 125M1884.5 125A3.5 3.5 0 0 0 1891.5 125M1877.5 131.5H1886.5L1888.5 136H1875.5Z" stroke-width="1.8"/>
<path d="M1831.5 114.5V117M1835 114.5V117M1838.5 114.5V117M1842 114.5V117M1831.5 122.5V125M1835 122.5V125M1838.5 122.5V125M1842 122.5V125M1831.5 130.5V133M1835 130.5V133M1838.5 130.5V133M1842 130.5V133" stroke-width="1.3"/>
</g>
<g fill="none" stroke="#d0d0d0" stroke-width="2.2"><circle cx="1746" cy="123" r="4.5"/><path d="M1750.5 119V125A3 3 0 0 0 1756 124A10.5 10.5 0 1 0 1751 132"/></g>
<rect x="2148" y="106" width="128" height="34" rx="17" fill="none" stroke="#3a3a3a" stroke-width="2"/>
<path d="M2213 107H2259A16 16 0 0 1 2259 139H2213Z" fill="#3577d0"/>
</svg>
<div class="t" style="left:1908px;top:1514px;font-size:22.4px;color:#b0b0b0">cline:x-ai/grok-code-f...</div>
<div class="t" style="left:2163px;top:1513px;font-size:20.3px;color:#e6e6e6">Plan</div>
<div class="t" style="left:2231px;top:1513px;font-size:20.8px;color:#ffffff">Act</div>
<svg style="left:0;top:0" width="2300" height="1560"><g fill="none" stroke="#c0c0c0" stroke-width="2" stroke-linecap="round" stroke-linejoin="round">
<path d="M2252 541L2261 550L2252 559"/>
<path d="M2250 635L2258 644L2250 653" stroke="#a0a0a0"/>
<path d="M2250 1003L2258 1012L2250 1021" stroke="#a0a0a0"/>
<path d="M2223 790L2231.5 798.5L2240 790" stroke="#b0b0b0"/>
<path d="M2223 1156L2231.5 1164.5L2240 1156" stroke="#b0b0b0"/>
<path d="M2243 933L2252 942L2261 933" stroke="#d0d0d0"/>
<path d="M2224 1265L2233 1256L2242 1265" stroke="#d0d0d0"/>
<path d="M1958 1258L1965 1267L1976 1248" stroke="#9d9d9d" stroke-width="2.4" stroke-linecap="butt"/>
</g>
<g fill="none" stroke="#d0d0d0" stroke-width="2" stroke-linejoin="round">
<path d="M1738.5 728.6V705H1750L1759.4 714.5V720.5M1749.8 705V714.5H1759.4M1738.5 728.6H1751"/><path d="M1753.5 727.4H1766.5M1760 721V734"/>
<path d="M1738.5 1095.6V1072H1750L1759.4 1081.5V1087.5M1749.8 1072V1081.5H1759.4M1738.5 1095.6H1751"/><path d="M1753.5 1094.4H1766.5M1760 1088V1101"/>
</g>
<path d="M1740 944L1747.5 951.5L1762 930" fill="none" stroke="#73c991" stroke-width="2.2"/>
<path d="M1740 865.5H1750.5V883L1745.2 877.5L1740 883Z" fill="none" stroke="#8a8a8a" stroke-width="1.6" stroke-linejoin="round"/>
<path d="M1765 874H2266" stroke="#5a5a5a" stroke-width="1.5" stroke-dasharray="4.5 4.5"/>
</svg>
<!--/CLINE-->
<!--ACTIVITY-->
<div class="a" style="left:2302px;top:74px;width:2px;height:1486px;background:#2b2b2b"></div>
<svg style="left:0;top:0" width="2388" height="1560"><g fill="none" stroke="#8a8a8a" stroke-width="2.6" stroke-linecap="round" stroke-linejoin="round">
<circle cx="2344" cy="115.7" r="14.6"/><path d="M2354.5 126.5L2370.5 142.5"/>
<circle cx="2339.6" cy="200.4" r="6"/><circle cx="2360" cy="210.5" r="6"/><circle cx="2339.6" cy="234" r="6"/><path d="M2339.6 206.4V228M2345 230C2348 224 2360 224 2360 216.5"/>
<path d="M2342 298V291L2373 310L2353 322.5"/>
<path d="M2338.5 315.5a4.5 4.5 0 0 1 4.5 4.5"/><rect x="2331" y="318" width="15" height="18" rx="7.5"/><path d="M2325.5 322.5H2331M2346 322.5H2351.5M2325.5 330H2331M2346 330H2351.5M2327 338L2332 333.5M2350 338L2345 333.5M2328 314.5L2332.5 319M2349 314.5L2344.5 319"/>
<path d="M2349 423.5H2328V391.5H2369.5V408"/><path d="M2339 430H2352"/><circle cx="2361" cy="420" r="11"/><path d="M2356 418.5L2360 421.5L2356 424.5M2366 415.5L2362 418.5L2366 421.5" stroke-width="1.8"/>
<path d="M2331.5 489V527H2369.5V507H2331.5M2350.5 489V527M2331.5 489H2350.5V507"/><path d="M2361.3 485.5L2371.3 496.5L2361.3 507.5L2351.3 496.5Z"/>
<path d="M2340.5 583H2359M2343.5 583V597L2333 619.5A2 2 0 0 0 2335 622H2365A2 2 0 0 0 2367 619.5L2356.5 597V583M2336.5 610.5H2363.5"/>
<circle cx="2349.8" cy="793.3" r="22.5"/><path d="M2346.5 783V805M2346.5 783L2357.5 796"/>
<path d="M2357.5 909A22.5 22.5 0 1 1 2372 889.4"/><path d="M2346.5 879V901M2346.5 879L2357 891"/>
<circle cx="2349.8" cy="1415.7" r="22.8"/><circle cx="2349.8" cy="1409.5" r="8.6"/><path d="M2336 1432A16 16 0 0 1 2363.6 1432"/>
<path d="M2346.69 1497.64 L2347.06 1491.48 L2352.54 1491.48 L2352.91 1497.64 L2357.62 1499.59 L2362.23 1495.50 L2366.10 1499.37 L2362.01 1503.98 L2363.96 1508.69 L2370.12 1509.06 L2370.12 1514.54 L2363.96 1514.91 L2362.01 1519.62 L2366.10 1524.23 L2362.23 1528.10 L2357.62 1524.01 L2352.91 1525.96 L2352.54 1532.12 L2347.06 1532.12 L2346.69 1525.96 L2341.98 1524.01 L2337.37 1528.10 L2333.50 1524.23 L2337.59 1519.62 L2335.64 1514.91 L2329.48 1514.54 L2329.48 1509.06 L2335.64 1508.69 L2337.59 1503.98 L2333.50 1499.37 L2337.37 1495.50 L2341.98 1499.59Z"/><circle cx="2349.8" cy="1511.8" r="5.3"/>
</g>
<g fill="#8a8a8a">
<path d="M2349.8 678.5C2351.5 691 2356.5 696.5 2369.3 698C2356.5 699.5 2351.5 705 2349.8 717.5C2348.1 705 2343.1 699.5 2330.3 698C2343.1 696.5 2348.1 691 2349.8 678.5Z"/>
<circle cx="2346.5" cy="782" r="4.2"/><circle cx="2358" cy="796" r="4.2"/><circle cx="2346.5" cy="805" r="4.2"/>
<circle cx="2346.5" cy="878" r="4.2"/><circle cx="2346.5" cy="901" r="4.2"/>
<circle cx="2361.3" cy="901.6" r="11"/>
<circle cx="2334.4" cy="1178" r="3"/><circle cx="2349.8" cy="1178" r="3"/><circle cx="2365.2" cy="1178" r="3"/>
</g>
<g fill="none" stroke="#181818" stroke-width="2.2"><circle cx="2360.5" cy="900.5" r="4.6"/><path d="M2364 904L2367.5 907.5"/></g>
<use href="#i_oai" transform="translate(2326 962) scale(2)" fill="#8a8a8a" stroke="#8a8a8a" stroke-width="0.15"/>
<g fill="none" stroke="#d8d8d8" stroke-width="3"><path d="M2340 1067.5H2359.5A10 10 0 0 1 2369.5 1077.5V1080L2372.5 1086.5L2369.5 1093V1095.5A10 10 0 0 1 2359.5 1105.5H2340A10 10 0 0 1 2330 1095.5V1093L2327 1086.5L2330 1080V1077.5A10 10 0 0 1 2340 1067.5Z"/></g>
<g fill="#d8d8d8"><circle cx="2349.8" cy="1061" r="6"/><rect x="2336.5" y="1079" width="7" height="16" rx="3.5"/><rect x="2356" y="1079" width="7" height="16" rx="3.5"/></g>
<circle cx="2364" cy="234" r="17.8" fill="#3577d0"/>
</svg>
<div class="t" style="left:2346px;top:224px;width:36px;text-align:center;font-size:19px;font-weight:bold;color:#fff">17</div>
<div class="a" style="left:0;top:1560px;width:2388px;height:2px;background:#2b2b2b"></div>
<div class="a" style="left:0;top:1562px;width:66px;height:10px;background:#3577d0"></div>
<div class="a" style="left:1880px;top:1562px;width:68px;height:10px;background:#786822"></div>
<!--/ACTIVITY-->
<!--STATUS-->
</body></html>
